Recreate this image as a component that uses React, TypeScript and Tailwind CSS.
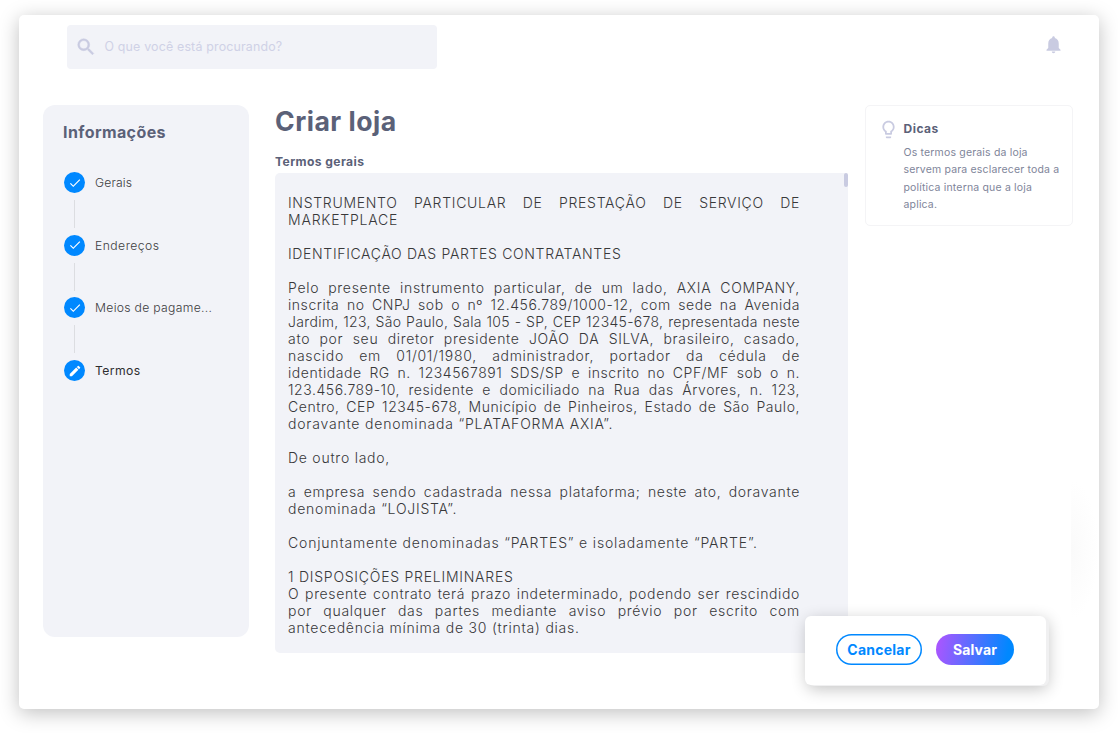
import { MdCheck, MdEdit, MdLightbulbOutline, MdNotifications, MdSearch } from "react-icons/md";

type Line = { text: string; spacing?: string; last?: boolean };

const contract: Line[][] = [
  [
    { text: "INSTRUMENTO PARTICULAR DE PRESTAÇÃO DE SERVIÇO DE" },
    { text: "MARKETPLACE", last: true, spacing: "tracking-[0.8px]" },
  ],
  [{ text: "IDENTIFICAÇÃO DAS PARTES CONTRATANTES", last: true, spacing: "tracking-[0.66px]" }],
  [
    { text: "Pelo presente instrumento particular, de um lado, AXIA COMPANY," },
    { text: "inscrita no CNPJ sob o nº 12.456.789/1000-12, com sede na Avenida", spacing: "tracking-[0.55px]" },
    { text: "Jardim, 123, São Paulo, Sala 105 - SP, CEP 12345-678, representada neste", spacing: "tracking-[0.32px]" },
    { text: "ato por seu diretor presidente JOÃO DA SILVA, brasileiro, casado," },
    { text: "nascido em 01/01/1980, administrador, portador da cédula de" },
    { text: "identidade RG n. 1234567891 SDS/SP e inscrito no CPF/MF sob o n.", spacing: "tracking-[0.55px]" },
    { text: "123.456.789-10, residente e domiciliado na Rua das Árvores, n. 123,", spacing: "tracking-[0.55px]" },
    { text: "Centro, CEP 12345-678, Município de Pinheiros, Estado de São Paulo,", spacing: "tracking-[0.55px]" },
    { text: "doravante denominada “PLATAFORMA AXIA”.", last: true, spacing: "tracking-[0.81px]" },
  ],
  [{ text: "De outro lado,", last: true, spacing: "tracking-[0.75px]" }],
  [
    { text: "a empresa sendo cadastrada nessa plataforma; neste ato, doravante" },
    { text: "denominada “LOJISTA”.", last: true, spacing: "tracking-[0.78px]" },
  ],
  [{ text: "Conjuntamente denominadas “PARTES” e isoladamente “PARTE”.", last: true, spacing: "tracking-[0.82px]" }],
  [
    { text: "1 DISPOSIÇÕES PRELIMINARES", last: true, spacing: "tracking-[0.76px]" },
    { text: "O presente contrato terá prazo indeterminado, podendo ser rescindido", spacing: "tracking-[0.64px]" },
    { text: "por qualquer das partes mediante aviso prévio por escrito com" },
    { text: "antecedência mínima de 30 (trinta) dias.", last: true, spacing: "tracking-[0.77px]" },
  ],
];

const steps = [
  { label: "Gerais", spacing: "tracking-[0.15px]" },
  { label: "Endereços", spacing: "tracking-[0.45px]" },
  { label: "Meios de pagame...", spacing: "tracking-[0.3px]" },
  { label: "Termos", spacing: "tracking-[0.4px]", current: true },
];

function Header() {
  return (
    <header className="flex items-start justify-between pt-[10px] pr-[35px] pl-12">
      <label className="flex h-11 w-[370px] items-center rounded-[4px] bg-[#f2f3f8] pl-[8px] text-[#c9cbe1]">
        <MdSearch className="mb-px size-[22px] [&>path:last-child]:stroke-current [&>path:last-child]:stroke-[0.5]" />
        <span className="ml-[7.5px] text-[12.4px] tracking-[0.18px] whitespace-nowrap text-[#cfd1e6]">O que você está procurando?</span>
      </label>
      <MdNotifications className="mt-[8.5px] size-[21px] text-[#c9cbe1]" />
    </header>
  );
}

function Sidebar() {
  return (
    <aside className="h-[532px] w-[206px] shrink-0 rounded-xl bg-[#f2f3f8] pt-[17px] pl-5">
      <h2 className="text-[16px] leading-5 font-bold tracking-[0.4px] text-[#5b6178]">Informações</h2>
      <ol className="mt-[30px]">
        {steps.map((s, i) => (
          <li key={s.label} className="h-[62.7px]">
            <div className="flex h-[21px] items-center">
              <span className="ml-[1px] flex size-[21px] items-center justify-center rounded-full bg-[#0088ff] text-white">
                {s.current ? <MdEdit className="size-[14px]" /> : <MdCheck className="size-[14px]" />}
              </span>
              <span className={`mt-px ml-[10px] text-[12.2px] whitespace-nowrap ${s.spacing} ${s.current ? "text-[#2e2e30]" : "font-light text-[#3c3c40]"}`}>{s.label}</span>
            </div>
            {i < steps.length - 1 && <div className="mt-[7px] ml-[11px] h-7 w-px bg-[#dcdde1]" />}
          </li>
        ))}
      </ol>
    </aside>
  );
}

function Terms() {
  return (
    <main className="ml-[26px] w-[573px] shrink-0">
      <h1 className="text-[26.6px] leading-8 font-bold tracking-[0.5px] text-[#5b6178]">Criar loja</h1>
      <h2 className="mt-[17px] text-[12.1px] leading-4 font-bold tracking-[0.4px] text-[#5b6178]">Termos gerais</h2>
      <div className="mt-[3px] flex h-[480px] justify-between rounded-[5px] bg-[#f2f3f8] pl-[13px]">
        <div className="flex w-[512px] flex-col gap-[17px] pt-[21px] text-[14px] leading-[17px] font-light text-[#38383a]">
          {contract.map((p) => (
            <div key={p[0].text}>
              {p.map((l) => (
                <p key={l.text} className={`whitespace-nowrap ${l.spacing ?? "tracking-[0.7px]"} ${l.last ? "" : "[text-align-last:justify]"}`}>{l.text}</p>
              ))}
            </div>
          ))}
        </div>
        <div className="h-[14px] w-1 rounded-[2px] bg-[#c9cbe1]" />
      </div>
    </main>
  );
}

function Tips() {
  return (
    <section className="ml-[17px] flex h-[121px] w-[208px] rounded-[5px] border border-[#f4f4f6] pt-[13px] pl-[12px]">
      <MdLightbulbOutline className="size-[21px] text-[#c9cbe1]" />
      <div className="ml-[4.5px] whitespace-nowrap">
        <h3 className="text-[12px] leading-[19px] font-bold tracking-[0.5px] text-[#5b6178]">Dicas</h3>
        <p className="mt-[6px] text-[10.5px] leading-[17.4px] tracking-[0.17px] text-[#80859a]">
          Os termos gerais da loja<br />servem para esclarecer toda a<br />política interna que a loja<br />aplica.
        </p>
      </div>
    </section>
  );
}

export default function App() {
  return (
    <div className="h-[733px] overflow-hidden bg-white pt-[15px] pl-[19px] font-['Inter',sans-serif]">
      <div className="relative h-[694px] w-[1080px] rounded-[5px] bg-white shadow-[0_4px_20px_rgba(0,0,0,0.25)]">
        <Header />
        <div className="mt-[36px] flex items-start pl-6">
          <Sidebar />
          <Terms />
          <Tips />
        </div>
        <div className="absolute top-[465px] left-[1052px] h-[140px] w-7 bg-[radial-gradient(ellipse_at_left,#fafafa,#ffffff_70%)]" />
        <div className="absolute top-[601px] left-[786px] flex h-[69px] w-[241px] items-center justify-center gap-[14px] rounded-[6px] bg-white pr-px pb-[2px] text-[14px] font-bold shadow-[3px_1px_0_#f0f0f1,2px_4px_16px_rgba(0,0,0,0.24)]">
          <button className="h-[31px] w-[86px] rounded-full tracking-[0.25px] text-[#0088ff] shadow-[inset_0_0_0_1.5px_#0088ff]">Cancelar</button>
          <button className="h-[31px] w-[78px] rounded-full bg-[linear-gradient(100deg,#b054ff,#0088ff_90%)] tracking-[0.15px] text-white">Salvar</button>
        </div>
      </div>
    </div>
  );
}
